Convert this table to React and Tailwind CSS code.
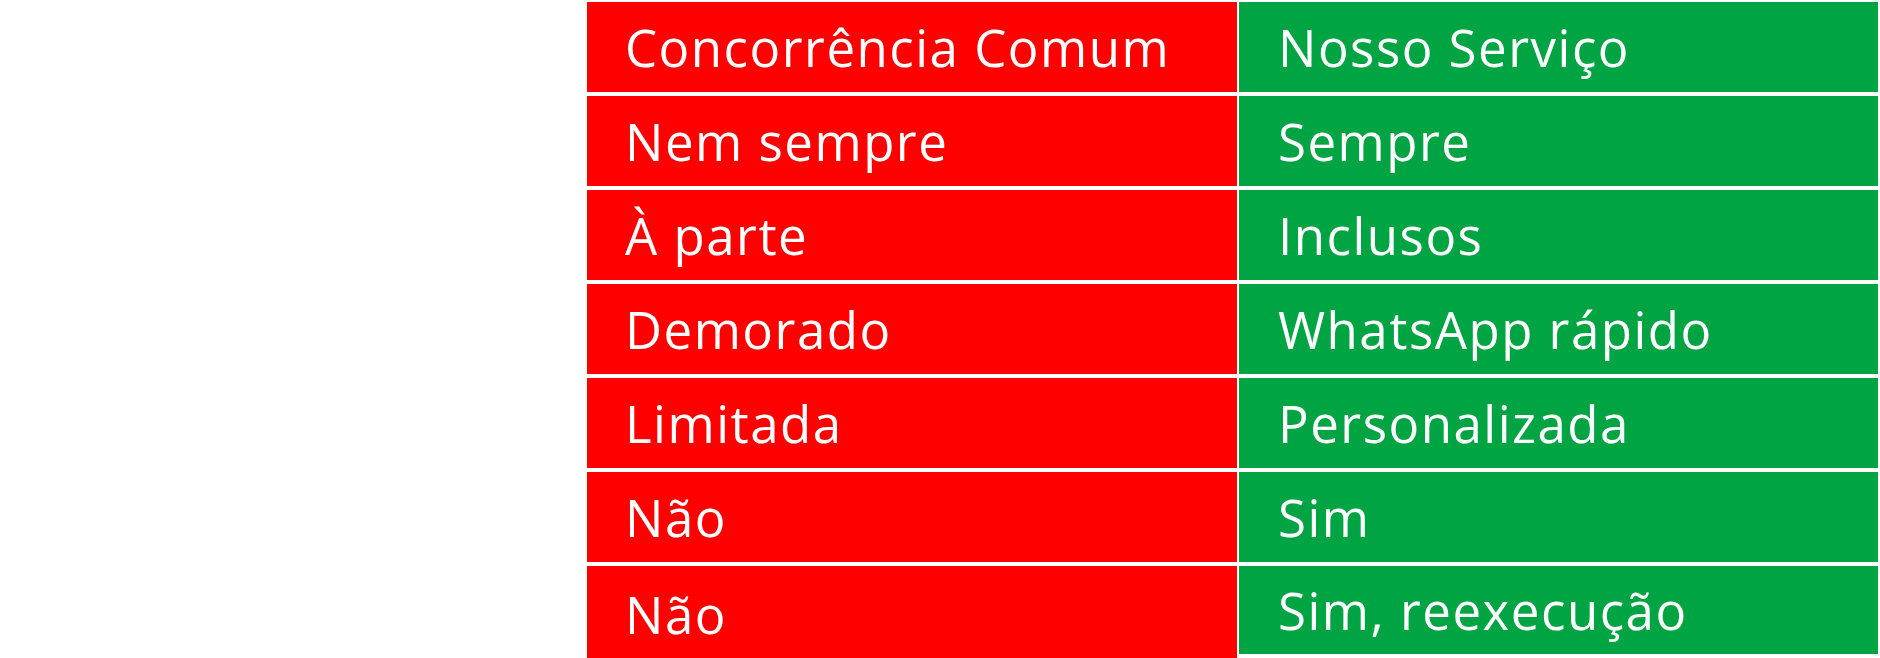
const ROWS = [
  ['Concorrência Comum', 'Nosso Serviço'],
  ['Nem sempre', 'Sempre'],
  ['À parte', 'Inclusos'],
  ['Demorado', 'WhatsApp rápido'],
  ['Limitada', 'Personalizada'],
  ['Não', 'Sim'],
  ['Não', 'Sim, reexecução'],
]

export default function App() {
  return (
    <div className="w-[1880px] h-[658px] overflow-hidden bg-white pl-[587px] pt-[2px]" style={{ fontFamily: '"Open Sans", "Noto Sans", sans-serif' }}>
      <div className="flex flex-col gap-[4px] w-[1291px]">
        {ROWS.map(([bad, good], i) => {
          const last = i === ROWS.length - 1
          return (
            <div key={i} className="flex gap-[2px] items-start">
              <div className={`w-[650px] ${last ? 'h-[96px]' : 'h-[90px]'} bg-[#ff0000] text-white flex items-center pl-[38px] pt-[1px]`}>
                <span className="text-[51px] font-normal leading-none tracking-[1.5px]">{bad}</span>
              </div>
              <div className={`w-[639px] ${last ? 'h-[88px]' : 'h-[90px]'} bg-[#00a443] text-white flex items-center pl-[39px] pt-[1px]`}>
                <span className="text-[51px] font-normal leading-none tracking-[1.5px]">{good}</span>
              </div>
            </div>
          )
        })}
      </div>
    </div>
  )
}
